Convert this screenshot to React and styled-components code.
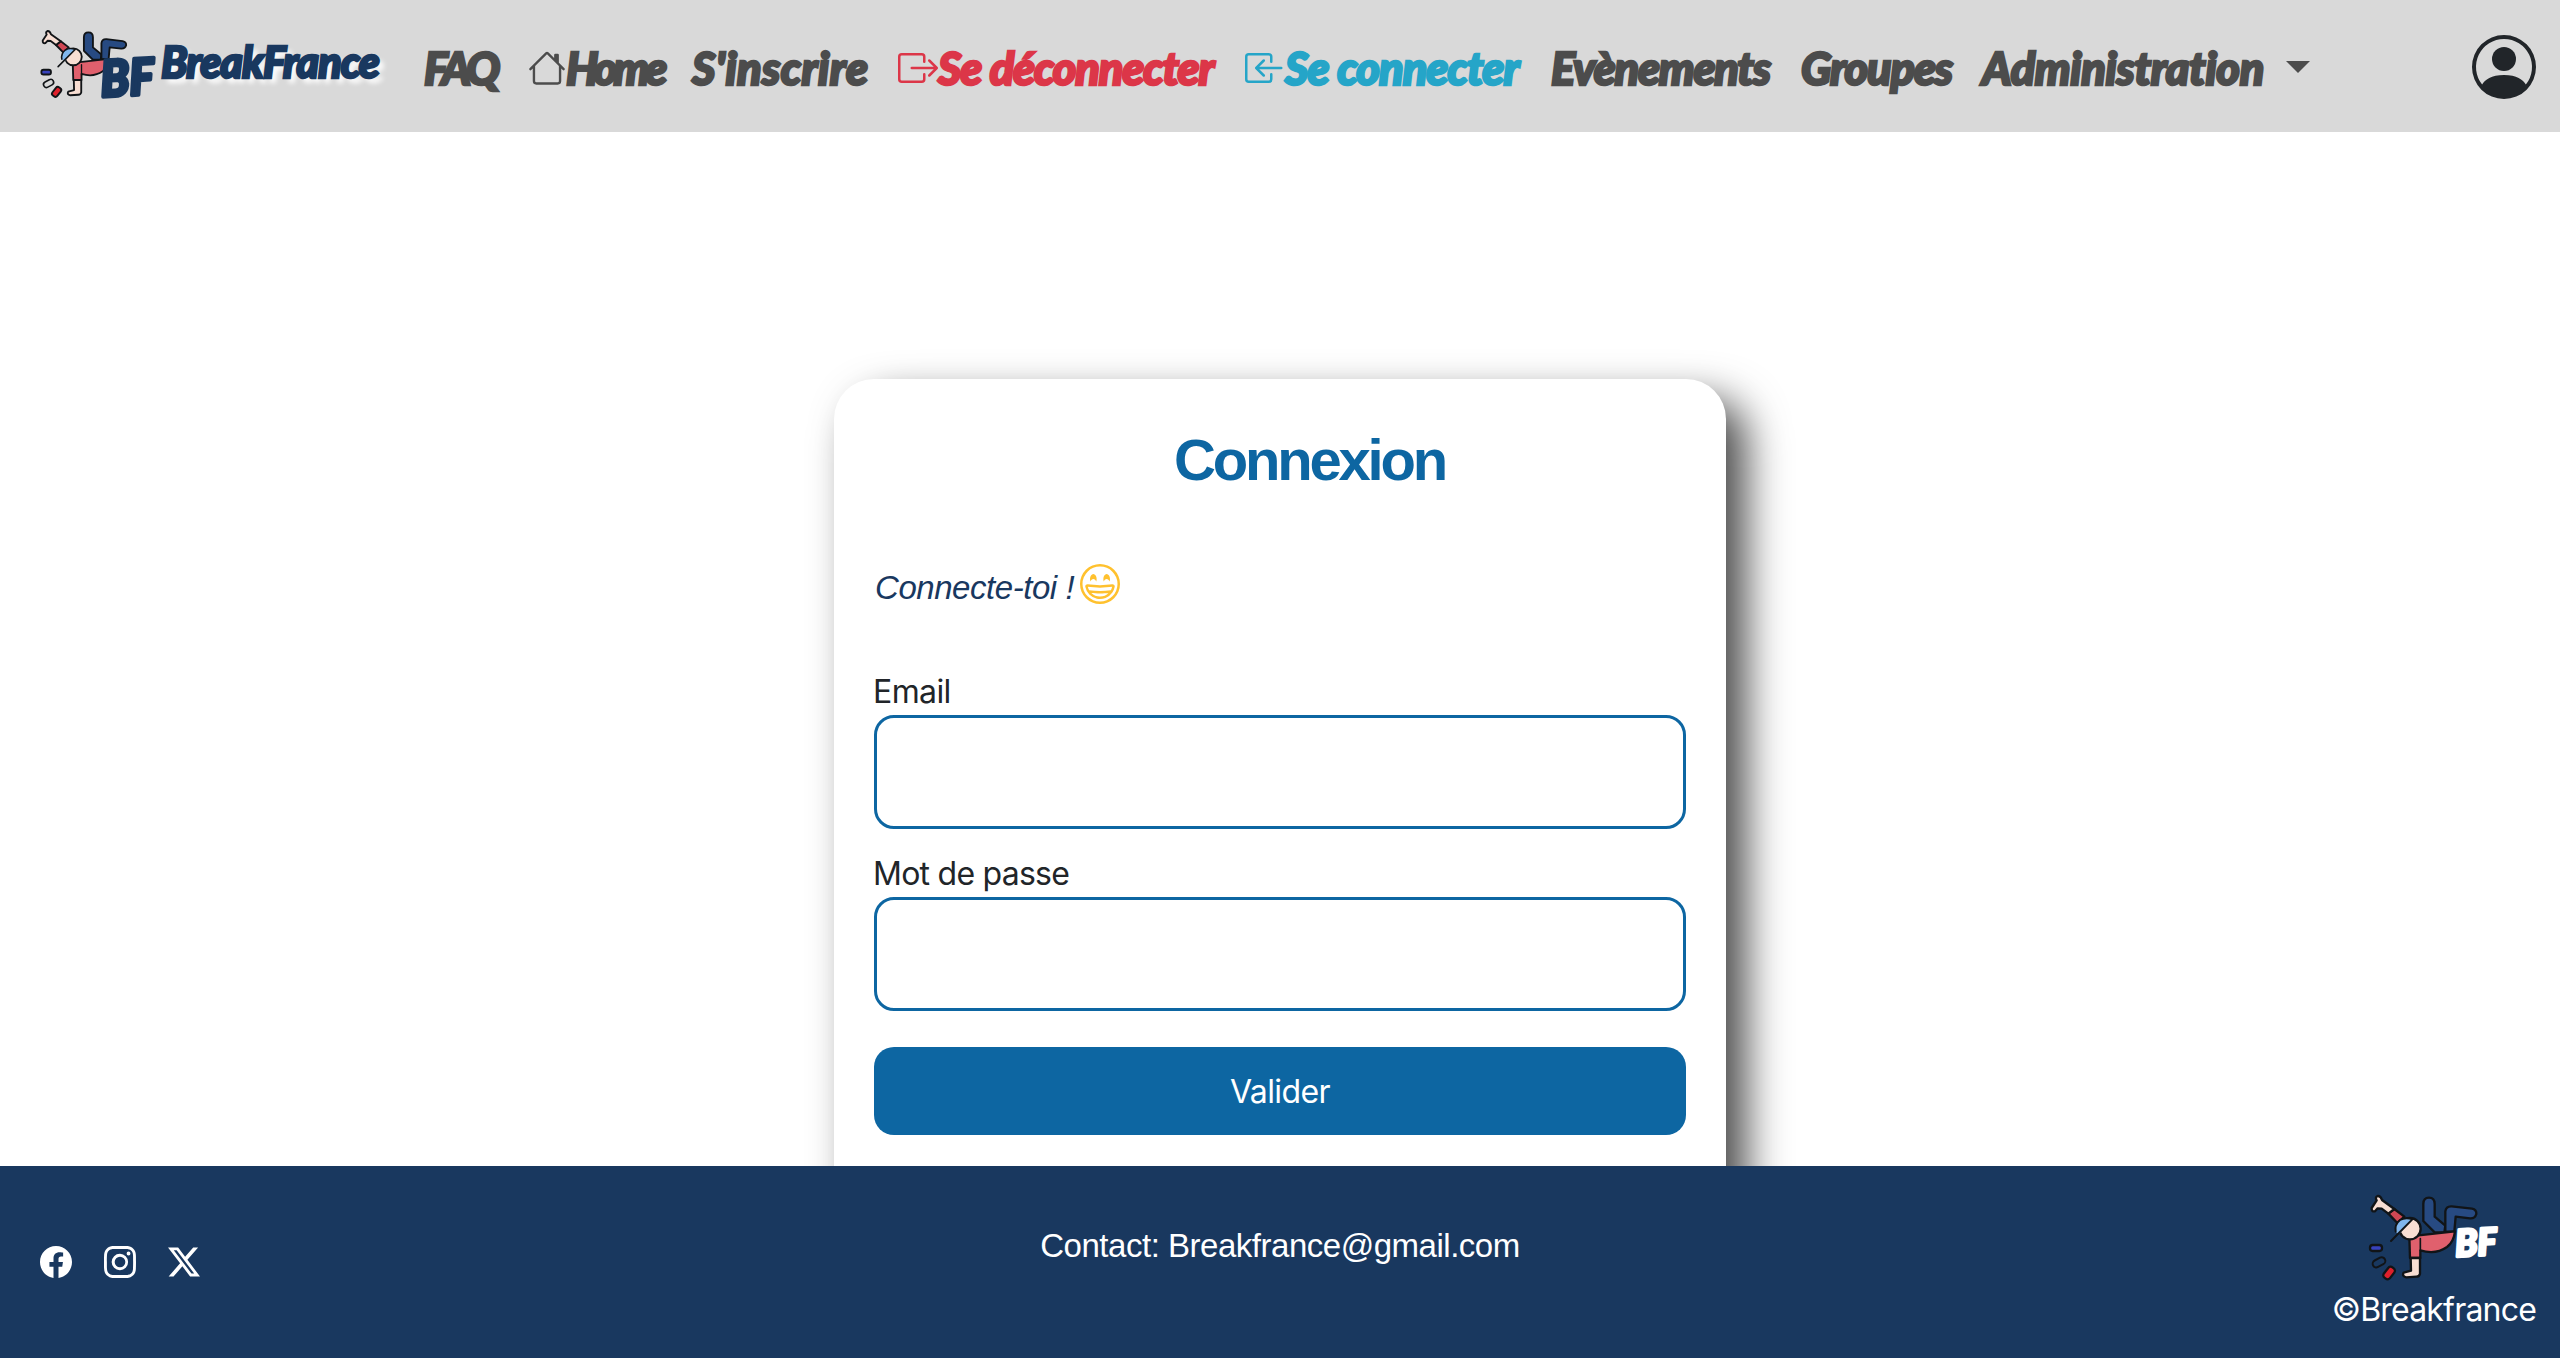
import React from "react";
import styled, { createGlobalStyle } from "styled-components";
import {
  BsHouse,
  BsBoxArrowRight,
  BsBoxArrowInLeft,
  BsPersonCircle,
  BsEmojiGrin,
  BsFacebook,
  BsInstagram,
  BsTwitterX,
} from "react-icons/bs";

const navy = "#19385f";
const blue = "#0d66a2";
const display = `Lato, "Open Sans", sans-serif`;
const helvetica = `"Liberation Sans", Arial, sans-serif`;
const system = `Inter, "Liberation Sans", sans-serif`;

const GlobalStyle = createGlobalStyle`
  *, *::before, *::after { box-sizing: border-box; }
  body { margin: 0; overflow: hidden; background: #fff; color: #212529; font-family: ${system}; font-size: 32px; }
  svg { display: block; flex: none; overflow: visible; }
`;

const Page = styled.div`
  display: grid;
  grid-template-rows: 132px 1fr 192px;
  height: 100vh;
`;

const Navbar = styled.header`
  display: flex;
  align-items: center;
  padding: 0 24px 0 38px;
  background: #d9d9d9;
`;

const Brand = styled.a`
  display: flex;
  align-items: center;
  width: 386px;
  height: 132px;
`;

const BrandName = styled.span`
  margin-left: 3px;
  margin-bottom: 8px;
  color: ${navy};
  font: italic 900 43px/60px ${display};
  letter-spacing: -1px;
  white-space: nowrap;
  -webkit-text-stroke: 2.5px ${navy};
  text-shadow: 5px 5px 5px #fff;
`;

const Nav = styled.nav`
  display: flex;
  align-items: center;
  gap: 32px;
`;

const NavLink = styled.a`
  display: flex;
  align-items: center;
  width: ${(p) => p.$width}px;
  height: 60px;
  margin-top: 4px;
  color: ${(p) => p.$color || "#4c4c4c"};
  font: italic 900 45px/60px ${display};
  letter-spacing: ${(p) => p.$spacing || 0}px;
  white-space: nowrap;
  -webkit-text-stroke: 2.5px currentColor;
`;

const Caret = styled.span`
  margin-left: 22px;
  margin-bottom: 2px;
  border: 12px solid transparent;
  border-top-color: #4c4c4c;
  border-bottom: 0;
`;

const Avatar = styled(BsPersonCircle)`
  margin-left: auto;
  margin-top: 2px;
`;

const Main = styled.main`
  display: flex;
  justify-content: center;
  align-items: flex-start;
  overflow: hidden;
  padding-top: 247px;
`;

const Card = styled.form`
  flex: none;
  display: flex;
  flex-direction: column;
  width: 892px;
  height: 900px;
  padding: 44px 40px;
  border-radius: 40px;
  background: #fff;
  box-shadow: 20px 20px 42px rgba(0, 0, 0, 0.71);
`;

const Title = styled.h1`
  height: 76px;
  margin: 0;
  padding-left: 59px;
  color: ${blue};
  font: 700 58px/74px ${helvetica};
  letter-spacing: -3.2px;
  text-align: center;
`;

const Intro = styled.p`
  display: flex;
  align-items: center;
  gap: 6px;
  height: 40px;
  margin: 65px 0 64px;
  color: ${navy};
  font: italic 400 33px/40px ${helvetica};
  letter-spacing: -0.45px;
  svg { color: #ffc12e; }
`;

const IntroText = styled.span`
  padding: 7px 0 0 1px;
`;

const Label = styled.label`
  height: 47px;
  margin-left: -1px;
  line-height: 48px;
  letter-spacing: ${(p) => p.$spacing}px;
`;

const Field = styled.input`
  height: 114px;
  margin: 0 0 21px;
  border: 3px solid ${blue};
  border-radius: 20px;
  background: #fff;
  font-size: 32px;
  outline: 0;
`;

const Submit = styled.button`
  height: 88px;
  margin-top: 15px;
  padding: 2px 0 0;
  border: 0;
  border-radius: 20px;
  background: ${blue};
  color: #fff;
  font: 400 32px/48px ${system};
  letter-spacing: -0.6px;
`;

const Footer = styled.footer`
  display: grid;
  grid-template-columns: 1fr auto 1fr;
  background: ${navy};
  color: #fff;
`;

const Socials = styled.div`
  display: flex;
  gap: 32px;
  padding: 80px 0 0 40px;
`;

const Contact = styled.p`
  margin: 0;
  padding-top: 56px;
  font: 400 33px/48px ${helvetica};
  letter-spacing: -0.48px;
`;

const Credit = styled.div`
  display: flex;
  flex-direction: column;
  align-items: flex-end;
  padding: 25px 24px 0 0;
  line-height: 48px;
  letter-spacing: -0.8px;
  svg { margin: 0 34px 3px 0; }
`;

function Dancer() {
  return (
    <g stroke="#111417" strokeWidth="7" strokeLinejoin="round" strokeLinecap="round">
      <path d="M371 133 Q371 114 388 114 Q405 114 405 133 V171 L437 198 L434 218 L405 218 L371 184 Z" fill="#274a82" />
      <path d="M437 216 V155 Q439 139 456 140 L517 147 Q531 150 530 163 Q526 177 511 176 L468 171 L464 216 Z" fill="#274a82" />
      <path d="M329 230 L466 215 Q462 247 442 262 Q408 286 362 272 V295 H331 Z" fill="#e0606d" />
      <path d="M362 237 V272" fill="none" strokeWidth="5" />
      <path d="M333 295 H361 V342 Q359 351 350 351 L320 353 Q306 350 312 339 L334 333 Z" fill="#f8ded3" />
      <path d="M266 162 L284 148 L314 171 L293 190 Z" fill="#d04754" />
      <path d="M266 162 L284 148 L247 121 Q243 108 234 109 Q225 113 231 122 L216 145 Q215 157 226 155 L234 146 L246 147 Z" fill="#f8ded3" />
      <circle cx="331" cy="207" r="32" fill="#f8ded3" />
      <path d="M288 216 Q284 195 301 181 Q318 171 335 179 L301 221 Q292 223 288 216 Z" fill="#80b6ed" stroke="none" />
      <path d="M288 216 Q284 195 301 181 Q318 171 338 179 L274 244" fill="none" strokeWidth="6" />
      <rect x="211" y="256" width="36" height="18" rx="8" fill="#3842bd" />
      <rect x="218" y="297" width="40" height="22" rx="11" transform="rotate(-28 238 308)" fill="none" strokeWidth="6" />
      <rect x="249" y="328" width="39" height="23" rx="9" transform="rotate(-52 269 340)" fill="#df202b" />
    </g>
  );
}

function HeaderLogo() {
  return (
    <svg width="120" height="80" viewBox="114 84 360 240">
      <g transform="translate(-44 13) scale(.797 .79)">
        <Dancer />
      </g>
      <text x="302" y="292" fontFamily="Lato" fontStyle="italic" fontWeight="900" fontSize="150"
        textLength="160" lengthAdjust="spacingAndGlyphs" fill="#19385f" stroke="#19385f" strokeWidth="12"
        strokeLinejoin="round" transform="rotate(-3 380 240)">BF</text>
    </svg>
  );
}

function FooterLogo() {
  return (
    <svg width="134" height="92" viewBox="205 94 402 276">
      <Dancer />
      <text x="466" y="288" fontFamily="Lato" fontStyle="italic" fontWeight="900" fontSize="112"
        textLength="124" lengthAdjust="spacingAndGlyphs" fill="#fff" stroke="#fff" strokeWidth="9"
        strokeLinejoin="round" transform="rotate(-3 530 245)">BF</text>
    </svg>
  );
}

export default function App() {
  return (
    <Page>
      <GlobalStyle />
      <Navbar>
        <Brand>
          <HeaderLogo />
          <BrandName>BreakFrance</BrandName>
        </Brand>
        <Nav>
          <NavLink $width={72} $spacing={-3.8}>FAQ</NavLink>
          <NavLink $width={132} $spacing={-4}><BsHouse size={38} />Home</NavLink>
          <NavLink $width={174} $spacing={0.4}>S'inscrire</NavLink>
          <NavLink $width={315} $spacing={-1.1} $color="#dc3648"><BsBoxArrowRight size={40} />Se déconnecter</NavLink>
          <NavLink $width={274} $spacing={-0.9} $color="#25a5c8"><BsBoxArrowInLeft size={40} />Se connecter</NavLink>
          <NavLink $width={218} $spacing={-1.2}>Evènements</NavLink>
          <NavLink $width={149} $spacing={-1.1}>Groupes</NavLink>
          <NavLink $width={330} $spacing={-0.35}>Administration<Caret /></NavLink>
        </Nav>
        <Avatar size={64} />
      </Navbar>
      <Main>
        <Card>
          <Title>Connexion</Title>
          <Intro><IntroText>Connecte-toi !</IntroText><BsEmojiGrin size={40} /></Intro>
          <Label htmlFor="email" $spacing={-0.6}>Email</Label>
          <Field id="email" type="email" />
          <Label htmlFor="password" $spacing={-0.75}>Mot de passe</Label>
          <Field id="password" type="password" />
          <Submit type="button">Valider</Submit>
        </Card>
      </Main>
      <Footer>
        <Socials>
          <BsFacebook size={32} />
          <BsInstagram size={32} />
          <BsTwitterX size={32} />
        </Socials>
        <Contact>Contact: Breakfrance@gmail.com</Contact>
        <Credit>
          <FooterLogo />
          <span>©Breakfrance</span>
        </Credit>
      </Footer>
    </Page>
  );
}
